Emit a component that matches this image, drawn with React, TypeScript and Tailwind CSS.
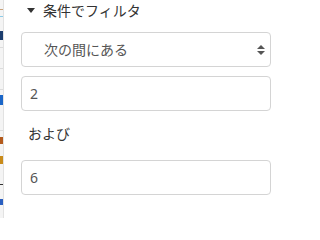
import React from "react";

const FONT = {
  fontFamily: '"Noto Sans", "Noto Sans CJK JP", sans-serif',
};

// the edge of the neighbouring panel, cut off by the frame
const STRIP_MARKS: { h: string; c: string; gap: string }[] = [
  { gap: "mt-[9px]", h: "h-[1px]", c: "bg-[#c9a27a]" },
  { gap: "mt-[6px]", h: "h-[1px]", c: "bg-[#8ccbe8]" },
  { gap: "mt-[14px]", h: "h-[9px]", c: "bg-[#1b3d6e]" },
  { gap: "mt-[7px]", h: "h-[1px]", c: "bg-[#dcdcdc]" },
  { gap: "mt-[20px]", h: "h-[1px]", c: "bg-[#dcdcdc]" },
  { gap: "mt-[20px]", h: "h-[1px]", c: "bg-[#dcdcdc]" },
  { gap: "mt-[5px]", h: "h-[10px]", c: "bg-[#1a66c8]" },
  { gap: "mt-[25px]", h: "h-[1px]", c: "bg-[#dcdcdc]" },
  { gap: "mt-[6px]", h: "h-[7px]", c: "bg-[#b35a1c]" },
  { gap: "mt-[12px]", h: "h-[8px]", c: "bg-[#c98b1a]" },
  { gap: "mt-[20px]", h: "h-[1px]", c: "bg-[#333333]" },
  { gap: "mt-[14px]", h: "h-[6px]", c: "bg-[#2a5fc0]" },
];

function SideStrip() {
  return (
    <div className="flex flex-col w-[4px] shrink-0 bg-[#f4f4f4] border-r border-[#e2e2e2]">
      {STRIP_MARKS.map((m, i) => (
        <div key={i} className={`${m.gap} ${m.h} ${m.c} w-[3px]`} />
      ))}
    </div>
  );
}

function SelectArrows() {
  return (
    <svg width="8" height="10" viewBox="0 0 8 10" className="shrink-0">
      <path d="M4 0 L8 4 L0 4 Z" fill="#555" />
      <path d="M0 6 L8 6 L4 10 Z" fill="#555" />
    </svg>
  );
}

export default function App() {
  return (
    <div className="flex h-[218px] w-[301px] bg-white text-[#333]" style={FONT}>
      <SideStrip />
      <div className="flex flex-1 flex-col pl-[17px] pr-[30px]">
        {/* Header */}
        <div className="flex items-center h-[20px] pl-[6px] gap-[8px] text-[14px] text-[#333]">
          <span className="block w-0 h-0 border-l-[4px] border-r-[4px] border-t-[5px] border-l-transparent border-r-transparent border-t-[#333]" />
          <span>条件でフィルタ</span>
        </div>

        {/* Operator select */}
        <div className="mt-[12px] flex items-center justify-between h-[35px] rounded-[4px] border border-[#d4d4d4] pl-[22px] pr-[5px] text-[14px] text-[#555]">
          <span>次の間にある</span>
          <SelectArrows />
        </div>

        {/* From */}
        <div className="mt-[9px] flex items-center h-[35px] rounded-[4px] border border-[#d4d4d4] px-[8px] text-[14px] text-[#555]">
          2
        </div>

        <div className="mt-[12px] h-[21px] pl-[7px] text-[14px] text-[#333] leading-[21px]">
          および
        </div>

        {/* To */}
        <div className="mt-[16px] flex items-center h-[35px] rounded-[4px] border border-[#d4d4d4] px-[8px] text-[14px] text-[#555]">
          6
        </div>
      </div>
    </div>
  );
}
